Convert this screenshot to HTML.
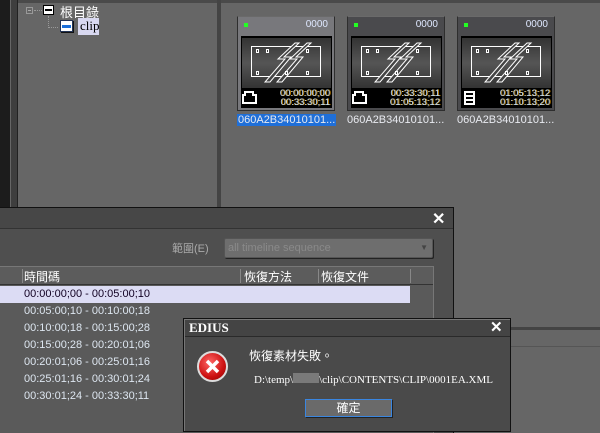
<!DOCTYPE html>
<html style="width:600px;height:433px;overflow:hidden"><head><meta charset="utf-8"><style>
*{margin:0;padding:0;box-sizing:border-box}
body{width:600px;height:433px;overflow:hidden;background:#666;position:relative;font-family:"Liberation Sans","Noto Sans CJK TC",sans-serif;font-size:12px;color:#fff}
.a{position:absolute}
.card{position:absolute;top:16px;width:98px;height:95px;background:#4a4a4d;border:1px solid #2e2e2e;border-top-color:#6a6a6a}
.card .dot{position:absolute;left:6px;top:6px;width:4px;height:4px;background:#2f2}
.card .n{position:absolute;right:6px;top:2px;font-size:10px;color:#dfe8ff}
.card .blk{position:absolute;left:3px;top:19px;width:91px;height:72px;background:#000}
.card .img{position:absolute;left:1px;top:2px;width:89px;height:50px;background:linear-gradient(#333,#555 50%,#333)}
.card .tc{position:absolute;right:2px;top:53px;font-size:9.5px;line-height:9px;color:#bfe0ff;text-align:right;text-shadow:1px 0 #c80}
.lbl{position:absolute;top:114px;font-size:11px;color:#e8eaf0;white-space:nowrap}
.row{position:absolute;left:0;width:410px;height:17px;font-size:11px;line-height:17px;padding-left:24px;color:#dde6f0}
</style></head><body>
<div class="a" style="left:0;top:0;width:10px;height:433px;background:#1c1c1c"></div>
<div class="a" style="left:10px;top:0;width:8px;height:433px;background:#3e3e3e;border-left:1px solid #666;border-right:1px solid #222"></div>
<div class="a" style="left:18px;top:0;width:600px;height:3px;background:#4a4a4a"></div>
<div class="a" style="left:217px;top:0;width:4px;height:210px;background:#444"></div>
<div class="a" style="left:26px;top:7px;width:7px;height:7px;border:1px solid #999"></div>
<div class="a" style="left:28px;top:10px;width:3px;height:1px;background:#aaa"></div>
<div class="a" style="left:34px;top:10px;width:8px;border-top:1px dotted #999"></div>
<div class="a" style="left:48px;top:16px;height:12px;border-left:1px dotted #999"></div>
<div class="a" style="left:48px;top:27px;width:10px;border-top:1px dotted #999"></div>
<div class="a" style="left:43px;top:5px;width:11px;height:10px;background:#fff;border:1px solid #000"><div style="margin:3px 1px;height:2px;background:#000"></div></div>
<div class="a" style="left:60px;top:2px;font-size:13px">根目錄</div>
<div class="a" style="left:60px;top:20px;width:13px;height:12px;background:#fff;border:1px solid #235;box-shadow:1px 1px #111"><div style="margin:4px 1px 0;height:3px;background:#1a6ed8"></div></div>
<div class="a" style="left:78px;top:18px;width:21px;height:17px;background:#d8d8f0;color:#000;font-family:'Liberation Serif',serif;font-size:13px;padding-left:2px;line-height:16px">clip</div>
<div class="card" style="left:237px;background:#78787c"><div class="dot"></div><div class="n">0000</div><div class="blk"><div class="img"></div><div class="tc">00:00:00;00<br>00:33:30;11</div></div></div>
<div class="card" style="left:347px"><div class="dot"></div><div class="n">0000</div><div class="blk"><div class="img"></div><div class="tc">00:33:30;11<br>01:05:13;12</div></div></div>
<div class="card" style="left:457px"><div class="dot"></div><div class="n">0000</div><div class="blk"><div class="img"></div><div class="tc">01:05:13;12<br>01:10:13;20</div></div></div>
<svg class="a" style="left:0;top:0" width="600" height="120">
<defs><g id="f" fill="none" stroke="#fff" stroke-width="1"><rect x="251.5" y="46.5" width="69" height="30"/>
<path d="M295 43 L278 59 L285 59 L265 82 L270 82 L291 57 L284 57 L299 43 Z" fill="#444"/>
<path d="M307 43 L290 59 L297 59 L277 82 L282 82 L303 57 L296 57 L311 43 Z" fill="#444"/>
<rect x="256.5" y="49.5" width="2" height="3"/><rect x="266.5" y="49.5" width="2" height="3"/><rect x="306.5" y="49.5" width="2" height="3"/><rect x="256.5" y="71.5" width="2" height="3"/><rect x="285.5" y="71.5" width="2" height="3"/><rect x="306.5" y="71.5" width="2" height="3"/></g></defs>
<use href="#f"/><use href="#f" x="110"/><use href="#f" x="220"/>
<g fill="none" stroke="#fff">
<path d="M245 92h8v3h3v8h-13v-8h2z" stroke-width="2"/><path d="M355 92h8v3h3v8h-13v-8h2z" stroke-width="2"/>
<rect x="465" y="92" width="9" height="12" stroke-width="2"/><path d="M465 96h9M465 100h9" stroke-width="2"/>
</g></svg>
<div class="lbl" style="left:237px;background:#1f6fd8;padding:0 1px">060A2B34010101...</div>
<div class="lbl" style="left:347px">060A2B34010101...</div>
<div class="lbl" style="left:457px">060A2B34010101...</div>
<div class="a" style="left:453px;top:327px;width:147px;height:3px;background:#444"></div>
<div class="a" style="left:453px;top:346px;width:147px;height:1px;background:#555"></div>
<div class="a" style="left:0;top:207px;width:454px;height:226px;background:#4f4f4f;border:1px solid #111;border-left:none;border-bottom:none;overflow:hidden">
<div class="a" style="left:0;top:0;width:453px;height:21px;background:#474747;border-bottom:1px solid #333"></div>
<div class="a" style="left:432px;top:1px;font-size:16px;font-weight:bold">✕</div>
<div class="a" style="left:172px;top:32px;color:#aaa;font-size:11px">範圍(E)</div>
<div class="a" style="left:224px;top:30px;width:209px;height:20px;background:#6e6e6e;border:1px solid #555;border-radius:2px;box-shadow:1px 1px #222;color:#8a8a8a;font-size:11px;padding:3px 3px">all timeline sequence<span style="position:absolute;right:4px;top:4px;font-size:8px;color:#444">▼</span></div>
<div class="a" style="left:0;top:58px;width:434px;height:180px;background:#5a5a5a;border:1px solid #777;border-left:none"></div>
<div class="a" style="left:0;top:59px;width:433px;height:18px;background:#5c5c5c;border-bottom:1px solid #333"></div>
<div class="a" style="left:22px;top:61px;height:14px;border-left:1px solid #888"></div>
<div class="a" style="left:240px;top:61px;height:14px;border-left:1px solid #888"></div>
<div class="a" style="left:318px;top:61px;height:14px;border-left:1px solid #888"></div>
<div class="a" style="left:410px;top:61px;height:14px;border-left:1px solid #888"></div>
<div class="a" style="left:24px;top:60px;font-size:12px">時間碼</div>
<div class="a" style="left:244px;top:60px;font-size:12px">恢復方法</div>
<div class="a" style="left:321px;top:60px;font-size:12px">恢復文件</div>
<div class="row" style="top:78px;background:#dcdcf4;color:#102">00:00:00;00 - 00:05:00;10</div>
<div class="row" style="top:95px">00:05:00;10 - 00:10:00;18</div>
<div class="row" style="top:112px">00:10:00;18 - 00:15:00;28</div>
<div class="row" style="top:129px">00:15:00;28 - 00:20:01;06</div>
<div class="row" style="top:146px">00:20:01;06 - 00:25:01;16</div>
<div class="row" style="top:163px">00:25:01;16 - 00:30:01;24</div>
<div class="row" style="top:180px">00:30:01;24 - 00:33:30;11</div>
</div>
<div class="a" style="left:183px;top:318px;width:328px;height:114px;background:#4a4a4a;border:1px solid #111;box-shadow:inset 1px 1px #777">
<div class="a" style="left:1px;top:1px;width:325px;height:17px;background:#444;border-bottom:1px solid #2a2a2a"></div>
<div class="a" style="left:5px;top:1px;font-family:'Liberation Serif',serif;font-weight:bold;font-size:13px">EDIUS</div>
<div class="a" style="left:306px;top:-1px;font-size:15px;font-weight:bold">✕</div>
<div class="a" style="left:13px;top:32px;width:31px;height:31px;border-radius:50%;background:radial-gradient(circle at 40% 35%,#f66,#c11 60%,#800);border:2px solid #ddd"></div>
<svg class="a" style="left:13px;top:32px" width="31" height="31"><path d="M10 10L21 21M21 10L10 21" stroke="#fff" stroke-width="3.5"/></svg>
<div class="a" style="left:65px;top:28px;font-size:12px">恢復素材失敗。</div>
<div class="a" style="left:70px;top:54px;font-family:'Liberation Serif',serif;font-size:11px;white-space:nowrap">D:\temp\<span style="display:inline-block;width:26px;height:10px;background:#7a7a7a"></span>\clip\CONTENTS\CLIP\0001EA.XML</div>
<div class="a" style="left:121px;top:80px;width:87px;height:18px;background:#6a6a6a;border:1px solid #3a86e0;box-shadow:1px 1px #222;text-align:center;font-size:12px;line-height:16px">確定</div>
</div>
</body></html>
